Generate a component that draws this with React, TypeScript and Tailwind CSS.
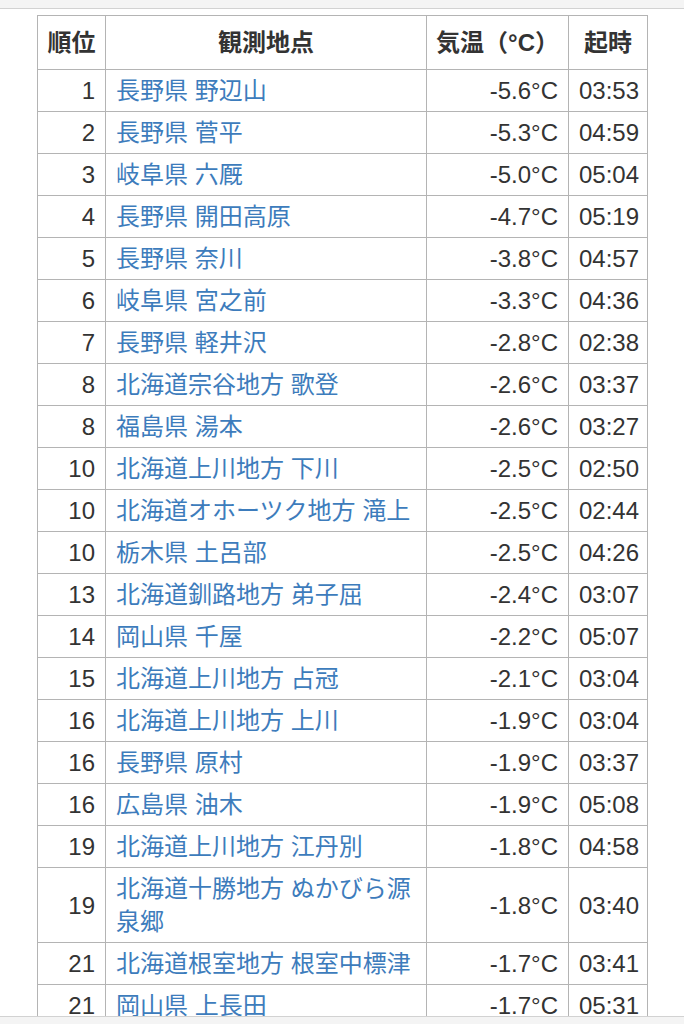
import React from 'react'

type Row = [string, string, string, string]

const rows: Row[] = [
  ['1', '長野県 野辺山', '-5.6°C', '03:53'],
  ['2', '長野県 菅平', '-5.3°C', '04:59'],
  ['3', '岐阜県 六厩', '-5.0°C', '05:04'],
  ['4', '長野県 開田高原', '-4.7°C', '05:19'],
  ['5', '長野県 奈川', '-3.8°C', '04:57'],
  ['6', '岐阜県 宮之前', '-3.3°C', '04:36'],
  ['7', '長野県 軽井沢', '-2.8°C', '02:38'],
  ['8', '北海道宗谷地方 歌登', '-2.6°C', '03:37'],
  ['8', '福島県 湯本', '-2.6°C', '03:27'],
  ['10', '北海道上川地方 下川', '-2.5°C', '02:50'],
  ['10', '北海道オホーツク地方 滝上', '-2.5°C', '02:44'],
  ['10', '栃木県 土呂部', '-2.5°C', '04:26'],
  ['13', '北海道釧路地方 弟子屈', '-2.4°C', '03:07'],
  ['14', '岡山県 千屋', '-2.2°C', '05:07'],
  ['15', '北海道上川地方 占冠', '-2.1°C', '03:04'],
  ['16', '北海道上川地方 上川', '-1.9°C', '03:04'],
  ['16', '長野県 原村', '-1.9°C', '03:37'],
  ['16', '広島県 油木', '-1.9°C', '05:08'],
  ['19', '北海道上川地方 江丹別', '-1.8°C', '04:58'],
  ['19', '北海道十勝地方 ぬかびら源泉郷', '-1.8°C', '03:40'],
  ['21', '北海道根室地方 根室中標津', '-1.7°C', '03:41'],
  ['21', '岡山県 上長田', '-1.7°C', '05:31'],
]

const th = "border border-[#b4b4b4] px-[8px] py-[10px] font-bold text-center whitespace-nowrap"
const td = "border border-[#b4b4b4] px-[10px] py-[4px] align-middle"

const App = () =>
{
  return (
    <div className="flex flex-col h-[1024px] w-[684px] overflow-hidden bg-white text-[#333] text-[24px] leading-[33px] font-['Liberation_Sans','Noto_Sans_CJK_JP',sans-serif]">
      <div className="h-[9px] shrink-0 bg-[#f4f4f4] border-b border-[#d2d2d2]"></div>
      <div className="flex-1 overflow-hidden pt-[6px] pl-[37px]">
        <table className="table-fixed border-collapse w-[610px]">
          <colgroup>
            <col className="w-[68px]" />
            <col className="w-[321px]" />
            <col className="w-[142px]" />
            <col className="w-[79px]" />
          </colgroup>
          <thead>
            <tr>
              <th className={th}>順位</th>
              <th className={th}>観測地点</th>
              <th className={th}>気温（°C）</th>
              <th className={th}>起時</th>
            </tr>
          </thead>
          <tbody>
            {rows.map((r, i) => (
              <tr key={i}>
                <td className={td + " text-right"}>{r[0]}</td>
                <td className={td + " text-left text-[#3d7cbc]"}>{r[1]}</td>
                <td className={td + " text-right"}>{r[2]}</td>
                <td className={td + " text-left"}>{r[3]}</td>
              </tr>
            ))}
          </tbody>
        </table>
      </div>
      <div className="h-[8px] shrink-0 bg-[#f4f4f4] border-t border-[#d2d2d2]"></div>
    </div>
  )
}

export default App
